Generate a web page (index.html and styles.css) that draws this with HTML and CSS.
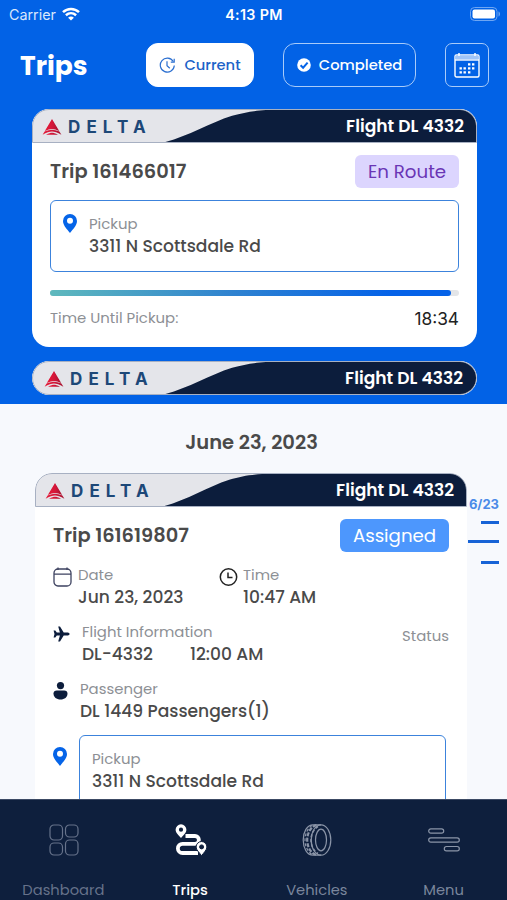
FILE: index.html
```html
<!DOCTYPE html>
<html lang="en">
<head>
<meta charset="utf-8">
<title>Trips</title>
<link rel="stylesheet" href="styles.css">
</head>
<body>
<svg class="defs" width="0" height="0" aria-hidden="true">
  <defs>
    <linearGradient id="redFade" x1="0" x2="1" y1="0" y2="0"><stop offset="0" stop-color="#e51937"/><stop offset=".5" stop-color="#d5173a"/><stop offset="1" stop-color="#a3122f"/></linearGradient>
    <symbol id="delta" viewBox="0 0 20 16">
      <path d="M10 0 L17.200 12 C14.500 10.600 12 10.200 10 10.200 S5.500 10.600 2.800 12Z" fill="url(#redFade)"/>
      <path d="M2.600 12.600 C5.500 11.200 8 10.900 10 10.900 S14.500 11.200 17.400 12.600 L19.400 15.800 C15.500 13.600 12.500 12.600 10 12.600 S4.500 13.600 .6 15.800Z" fill="url(#redFade)"/>
      <path d="M4 15.800 C7 14.200 8.500 13.700 10 13.700 S13 14.200 16 15.800Z" fill="url(#redFade)"/>
    </symbol>
    <symbol id="pin" viewBox="0 0 14 19">
      <path fill-rule="evenodd" d="M7 0a7 7 0 0 1 7 7c0 4.600-4.500 8.500-7 12C4.500 15.500 0 11.600 0 7a7 7 0 0 1 7-7Zm0 3.800a3 3 0 1 0 0 6 3 3 0 0 0 0-6Z" fill="#0564e8"/>
    </symbol>
    <symbol id="swoosh" viewBox="0 0 445 33" preserveAspectRatio="none">
      <path d="M133 33 C156 27 178 13 200 6 C212 2.500 220 1 234 0 H445 V33Z" fill="#0c1d3c"/>
    </symbol>
  </defs>
</svg>
<div class="screen">
  <section class="top">
    <div class="statusbar">
      <div class="carrier"><span class="t-carrier">Carrier</span>
        <svg width="18" height="14" viewBox="0 0 18 14" fill="none" stroke="#fff" stroke-width="2.500"><path d="M1 5.200C5.500.8 12.500.8 17 5.200"/><path d="M3.900 8.200c3-2.700 7.200-2.700 10.200 0"/><path d="M9 13.600 6.100 10.700c1.700-1.500 4.100-1.500 5.800 0Z" fill="#fff" stroke="none"/></svg>
      </div>
      <span class="t-clock">4:13 PM</span>
      <div class="battery"><svg width="31" height="14" viewBox="0 0 31 14"><rect x=".5" y=".5" width="26.500" height="13" rx="4" fill="none" stroke="#6ea6f3"/><rect x="2.500" y="2.500" width="22.500" height="9" rx="2" fill="#fff"/><path d="M28.500 4.500c2 .6 2 4.400 0 5Z" fill="#6ea6f3"/></svg></div>
    </div>
    <header class="header">
      <h1 class="t-h1">Trips</h1>
      <div class="pill current">
        <svg width="17" height="17" viewBox="0 0 17 17" fill="none" stroke="#2b6fd0" stroke-width="1.200"><path d="M14.300 4.500A7 7 0 1 0 15.300 8.500"/><path d="M15.200 1.800v3.400h-3.400"/><path d="M8 4.300v4.500l2.800 2.500"/></svg>
        <span>Current</span>
      </div>
      <div class="pill completed">
        <svg width="14" height="14" viewBox="0 0 14 14"><circle cx="7" cy="7" r="6.800" fill="#fff"/><path d="m3.600 7.200 2.500 2.500 4.500-5" fill="none" stroke="#0564e8" stroke-width="2"/></svg>
        <span>Completed</span>
      </div>
      <div class="pill cal">
        <svg width="26" height="26" viewBox="0 0 26 26"><rect x="1" y="3" width="24" height="22" rx="1.500" fill="none" stroke="#fff" stroke-width="1.400"/><path d="M1.500 3.500h23v4h-23Z" fill="#9fc4f8"/><path d="M1 8h24" stroke="#fff" stroke-width="1.400"/><path d="M5 1v3M21 1v3" stroke="#fff" stroke-width="1.500"/><g fill="#fff"><path d="M14 11.300h2.400v2.200H14zM18 11.300h2.400v2.200H18zM5.500 15.200h2.400v2.200H5.500zM9.500 15.200h2.400v2.200H9.500zM14 15.200h2.400v2.200H14zM18 15.200h2.400v2.200H18zM5.500 19.200h2.400v2.200H5.500zM9.500 19.200h2.400v2.200H9.500zM14 19.200h2.400v2.200H14z"/></g></svg>
      </div>
    </header>
    <article class="card card-active">
      <div class="airline">
        <svg class="swoosh"><use href="#swoosh"/></svg>
        <div class="brand"><svg width="20" height="16"><use href="#delta"/></svg><b>DELTA</b></div>
        <span class="flight">Flight DL 4332</span>
      </div>
      <div class="body">
        <div class="title-row"><h2 class="trip">Trip 161466017</h2><span class="badge enroute">En Route</span></div>
        <div class="pickup">
          <svg class="pin" width="14" height="19"><use href="#pin"/></svg>
          <div><p class="label">Pickup</p><p class="value">3311 N Scottsdale Rd</p></div>
        </div>
        <div class="progress"><div class="fill"></div></div>
        <div class="until"><span class="label">Time Until Pickup:</span><span class="timer">18:34</span></div>
      </div>
    </article>
    <article class="card card-collapsed">
      <div class="airline">
        <svg class="swoosh"><use href="#swoosh"/></svg>
        <div class="brand"><svg width="20" height="16"><use href="#delta"/></svg><b>DELTA</b></div>
        <span class="flight">Flight DL 4332</span>
      </div>
    </article>
  </section>
  <section class="list">
    <h3 class="day">June 23, 2023</h3>
    <div class="list-row">
      <article class="card card-assigned">
        <div class="airline">
          <svg class="swoosh"><use href="#swoosh"/></svg>
          <div class="brand"><svg width="20" height="16"><use href="#delta"/></svg><b>DELTA</b></div>
          <span class="flight">Flight DL 4332</span>
        </div>
        <div class="body">
          <div class="title-row"><h2 class="trip">Trip 161619807</h2><span class="badge assigned">Assigned</span></div>
          <div class="info when">
            <svg width="19" height="20" viewBox="0 0 19 20" fill="none" stroke="#3d4260" stroke-width="1.300"><rect x="1" y="2" width="17" height="17" rx="4"/><path d="M1 7.200h17M5 .5v2.500M14 .5v2.500"/></svg>
            <div class="date"><p class="label">Date</p><p class="value">Jun 23, 2023</p></div>
            <svg width="19" height="20" viewBox="0 0 19 20" fill="none" stroke="#222" stroke-width="1.500"><circle cx="9.500" cy="10" r="8.200"/><path d="M9 5.500v5h4.500"/></svg>
            <div class="time"><p class="label">Time</p><p class="value">10:47 AM</p></div>
          </div>
          <div class="info flightinfo">
            <svg width="17" height="16" viewBox="0 0 17 16"><path d="M16.700 8c0 .9-1.300 1.500-2.600 1.500h-3.400L7 15.500H5.200l1.700-6H3.800L2.300 11.500H.6L1.500 8 .6 4.500h1.700l1.500 2h3.100L5.200.5H7l3.700 6h3.400c1.300 0 2.600.6 2.600 1.500Z" fill="#0c1d3c"/></svg>
            <div class="grow"><p class="label">Flight Information</p><p class="value"><span>DL-4332</span><span class="v-ftime">12:00 AM</span></p></div>
            <span class="label l-status">Status</span>
          </div>
          <div class="info passenger">
            <svg width="15" height="18" viewBox="0 0 15 18" fill="#0c1d3c"><circle cx="7.500" cy="3.600" r="3.600"/><path d="M3.800 8.500h7.400c2 0 3.300 1.200 3.300 3 0 3.800-3 6-7 6s-7-2.200-7-6c0-1.800 1.300-3 3.300-3Z"/></svg>
            <div><p class="label">Passenger</p><p class="value">DL 1449 Passengers(1)</p></div>
          </div>
          <div class="stop">
            <svg class="pin" width="14" height="19"><use href="#pin"/></svg>
            <div class="pickup"><div><p class="label">Pickup</p><p class="value">3311 N Scottsdale Rd</p></div></div>
          </div>
        </div>
      </article>
      <aside class="scrubber"><span>6/23</span><i></i><i class="long"></i><i></i></aside>
    </div>
  </section>
  <nav class="tabs">
    <div class="tab">
      <svg width="30" height="32" viewBox="0 0 30 32" fill="none" stroke="#66728a" stroke-width="1.200"><rect x="1" y="1" width="12.500" height="15" rx="4"/><rect x="16.500" y="1" width="12.500" height="12" rx="4"/><rect x="1" y="19" width="12.500" height="12" rx="4"/><rect x="16.500" y="16" width="12.500" height="15" rx="4"/></svg>
      <span>Dashboard</span>
    </div>
    <div class="tab on">
      <svg width="32" height="32" viewBox="0 0 32 32"><path d="M10.500 12H20a3.900 3.900 0 0 1 0 7.800H7.500a4.600 4.600 0 0 0 0 9.200H23" fill="none" stroke="#fff" stroke-width="3.800"/><path fill="#fff" fill-rule="evenodd" d="M6 .3a5.400 5.400 0 0 1 5.400 5.400c0 3-3.100 5.300-5.400 8.300C3.700 11 .6 8.700.6 5.700A5.400 5.400 0 0 1 6 .3Zm0 3.300a2.100 2.100 0 1 0 0 4.200 2.100 2.100 0 0 0 0-4.200Z"/><path fill="#fff" stroke="#0e1f3d" stroke-width="1" fill-rule="evenodd" d="M26.600 17.500a5.500 5.500 0 0 1 5.300 5.500c0 3-3 5.500-5.300 8.700-2.300-3.200-5.500-5.700-5.500-8.700a5.500 5.500 0 0 1 5.500-5.500Zm0 3.400a2 2 0 1 0 0 4 2 2 0 0 0 0-4Z"/></svg>
      <span>Trips</span>
    </div>
    <div class="tab">
      <svg width="30" height="32" viewBox="0 0 30 32" fill="none" stroke="#8b95a8" stroke-width="1.200"><ellipse cx="19" cy="16" rx="9.800" ry="15.200"/><ellipse cx="19" cy="16" rx="5.500" ry="10.800"/><path d="M19 .8H11C5 .8 1.200 8 1.200 16S5 31.200 11 31.200h8"/><path d="M14.500 1C9 2.500 5.200 9 5.200 16S9 29.500 14.500 31" stroke-dasharray="4 1.500" stroke-width="2.200"/><path d="M10 1.500C6 4 3 9.500 3 16s3 12 7 14.500" stroke-dasharray="3 2"/><path d="M16 2.500c-4 2.500-7 7.500-7 13.500s3 11 7 13.500" stroke-dasharray="3 2" stroke-width="1.500"/></svg>
      <span>Vehicles</span>
    </div>
    <div class="tab">
      <svg width="32" height="32" viewBox="0 0 32 32" fill="none" stroke="#8b95a8" stroke-width="1.200"><rect x=".7" y="4.800" width="15" height="4.300" rx="2.150"/><rect x=".7" y="13.800" width="30.600" height="4.300" rx="2.150"/><rect x="16.300" y="22.500" width="15" height="4.300" rx="2.150"/></svg>
      <span>Menu</span>
    </div>
  </nav>
</div>
</body>
</html>
```
FILE: styles.css
```css
* { box-sizing: border-box; margin: 0; padding: 0; }
body { font-family: Poppins, Inter, "Open Sans", sans-serif; font-size: 16px; color: #4a4a4a; background: #f7f9fd; }
svg { display: block; flex: none; }
.defs { position: absolute; }
span, b, p, h1, h2, h3 { white-space: nowrap; }
.screen { width: 507px; height: 900px; overflow: hidden; display: flex; flex-direction: column; }

.top { flex: none; height: 404px; background: #0262e6; padding-bottom: 9px; display: flex; flex-direction: column; }
.statusbar { height: 28px; display: grid; grid-template-columns: 1fr auto 1fr; align-items: center; padding: 0 6px 0 9px; color: #fff; font-family: Inter, sans-serif; }
.carrier { display: flex; align-items: center; gap: 6px; font-size: 14.300px; color: #d9e7fc; }
.t-clock { font-size: 14.300px; font-weight: 600; letter-spacing: .35px; margin-right: 2px; }
.battery { display: flex; justify-content: flex-end; }

.header { height: 81px; display: flex; align-items: flex-start; padding: 15px 18px 0 20px; color: #fff; }
.t-h1 { width: 126px; font-size: 26.500px; font-weight: 700; line-height: 46px; }
.pill { height: 44px; border-radius: 12px; display: flex; align-items: center; justify-content: center; font-size: 14.700px; font-weight: 500; border: 1.500px solid #a9cbf9; }
.current { width: 108px; gap: 8px; background: #fff; border-color: #fff; color: #1c62c8; margin-right: 29px; }
.completed { width: 133px; gap: 8px; margin-right: 29px; }
.cal { width: 44px; border-radius: 7px; }

.card { background: #fff; overflow: hidden; }
.card-active { height: 238px; margin: 0 30px 14px 32px; border-radius: 17px; }
.card-collapsed { height: 34px; margin: 0 30px 0 32px; border-radius: 17px; }
.airline { position: relative; height: 34px; display: flex; align-items: center; justify-content: space-between; padding: 0 12px 0 9px; background: #e4e5ea; border: 1px solid #a7b0c2; }
.card .airline { border-radius: 17px 17px 0 0; overflow: hidden; }
.card-collapsed .airline { border-radius: 17px; padding: 0 13px 0 11px; }
.swoosh { position: absolute; inset: 0; width: 100%; height: 100%; }
.brand { position: relative; display: flex; align-items: center; gap: 6px; padding-top: 2px; }
.brand b { font-family: Inter, "Open Sans", sans-serif; font-size: 17px; line-height: 20px; font-weight: 700; letter-spacing: 6.100px; color: #1d4878; }
.flight { position: relative; font-size: 17.100px; line-height: 26px; font-weight: 600; color: #fff; }

.body { padding: 12px 18px 0; }
.title-row { display: flex; justify-content: space-between; align-items: flex-start; height: 34px; }
.trip { font-size: 19.400px; font-weight: 600; line-height: 34px; }
.badge { height: 33px; border-radius: 6px; font-size: 18.200px; line-height: 34px; text-align: center; }
.enroute { width: 104px; background: #dcd5fe; color: #6a35b5; }
.assigned { width: 109px; background: #4d97fd; color: #fff; }
.label { font-size: 14.900px; line-height: 22px; color: #8d9095; }
.value { font-size: 17.100px; line-height: 23px; font-weight: 500; }
.pickup { display: flex; height: 72px; border: 1.500px solid #3c83dc; border-radius: 6px; padding: 12px 12px 0; }
.card-active .pickup { margin-top: 11px; gap: 12px; }
.card-active .pin { margin-top: 1px; }
.progress { height: 6px; margin-top: 18px; border-radius: 3px; background: #e3e5e8; }
.fill { width: 401px; height: 6px; border-radius: 3px; background: linear-gradient(90deg, #5fb9bd, #2f83d0 45%, #0562e8 85%); }
.until { display: flex; justify-content: space-between; align-items: center; height: 24px; margin-top: 10px; }
.timer { font-family: Inter, sans-serif; font-size: 17.300px; color: #222; }

.list { flex: 1; min-height: 0; overflow: hidden; }
.day { height: 69px; padding-top: 24px; text-align: center; font-size: 19.500px; line-height: 30px; font-weight: 600; padding-right: 4px; }
.list-row { display: flex; padding-left: 35px; }
.card-assigned { width: 432px; height: 400px; border-radius: 17px 17px 0 0; }
.info { display: flex; height: 57px; }
.when { margin-top: 11px; }
.when > svg { margin-top: 3px; }
.date { width: 147px; padding-left: 6px; }
.time { padding-left: 5px; }
.flightinfo > svg { margin-top: 5px; }
.grow { flex: 1; padding-left: 12px; }
.l-status { padding-top: 4px; }
.v-ftime { margin-left: 37px; }
.passenger > svg { margin-top: 4px; }
.passenger > div { padding-left: 12px; }
.stop { display: flex; gap: 12px; }
.stop > .pin { margin-top: 12px; }
.stop .pickup { width: 367px; height: 90px; }
.scrubber { width: 32px; padding-top: 20px; display: flex; flex-direction: column; align-items: flex-end; font-family: Inter, sans-serif; font-size: 13px; line-height: 22px; font-weight: 700; color: #4b8be8; }
.scrubber i { width: 18px; height: 3px; background: #1763d6; margin: 6px 0 11px; }
.scrubber .long { width: 31px; margin: 5px 0 12px; }

.tabs { flex: none; height: 101px; background: #0e1f3d; border-top: 1px solid #3c4a64; display: grid; grid-template-columns: repeat(4, 1fr); }
.tab { display: flex; flex-direction: column; align-items: center; padding-top: 24px; font-size: 14.700px; color: #7a869c; }
.tab svg { margin-left: 2px; }
.tab:nth-child(n+3) svg { margin-left: 0; }
.tab span { margin-top: 23px; line-height: 22px; }
.tab:first-child { color: #66728a; }
.tab.on { color: #fff; font-weight: 500; }
```
